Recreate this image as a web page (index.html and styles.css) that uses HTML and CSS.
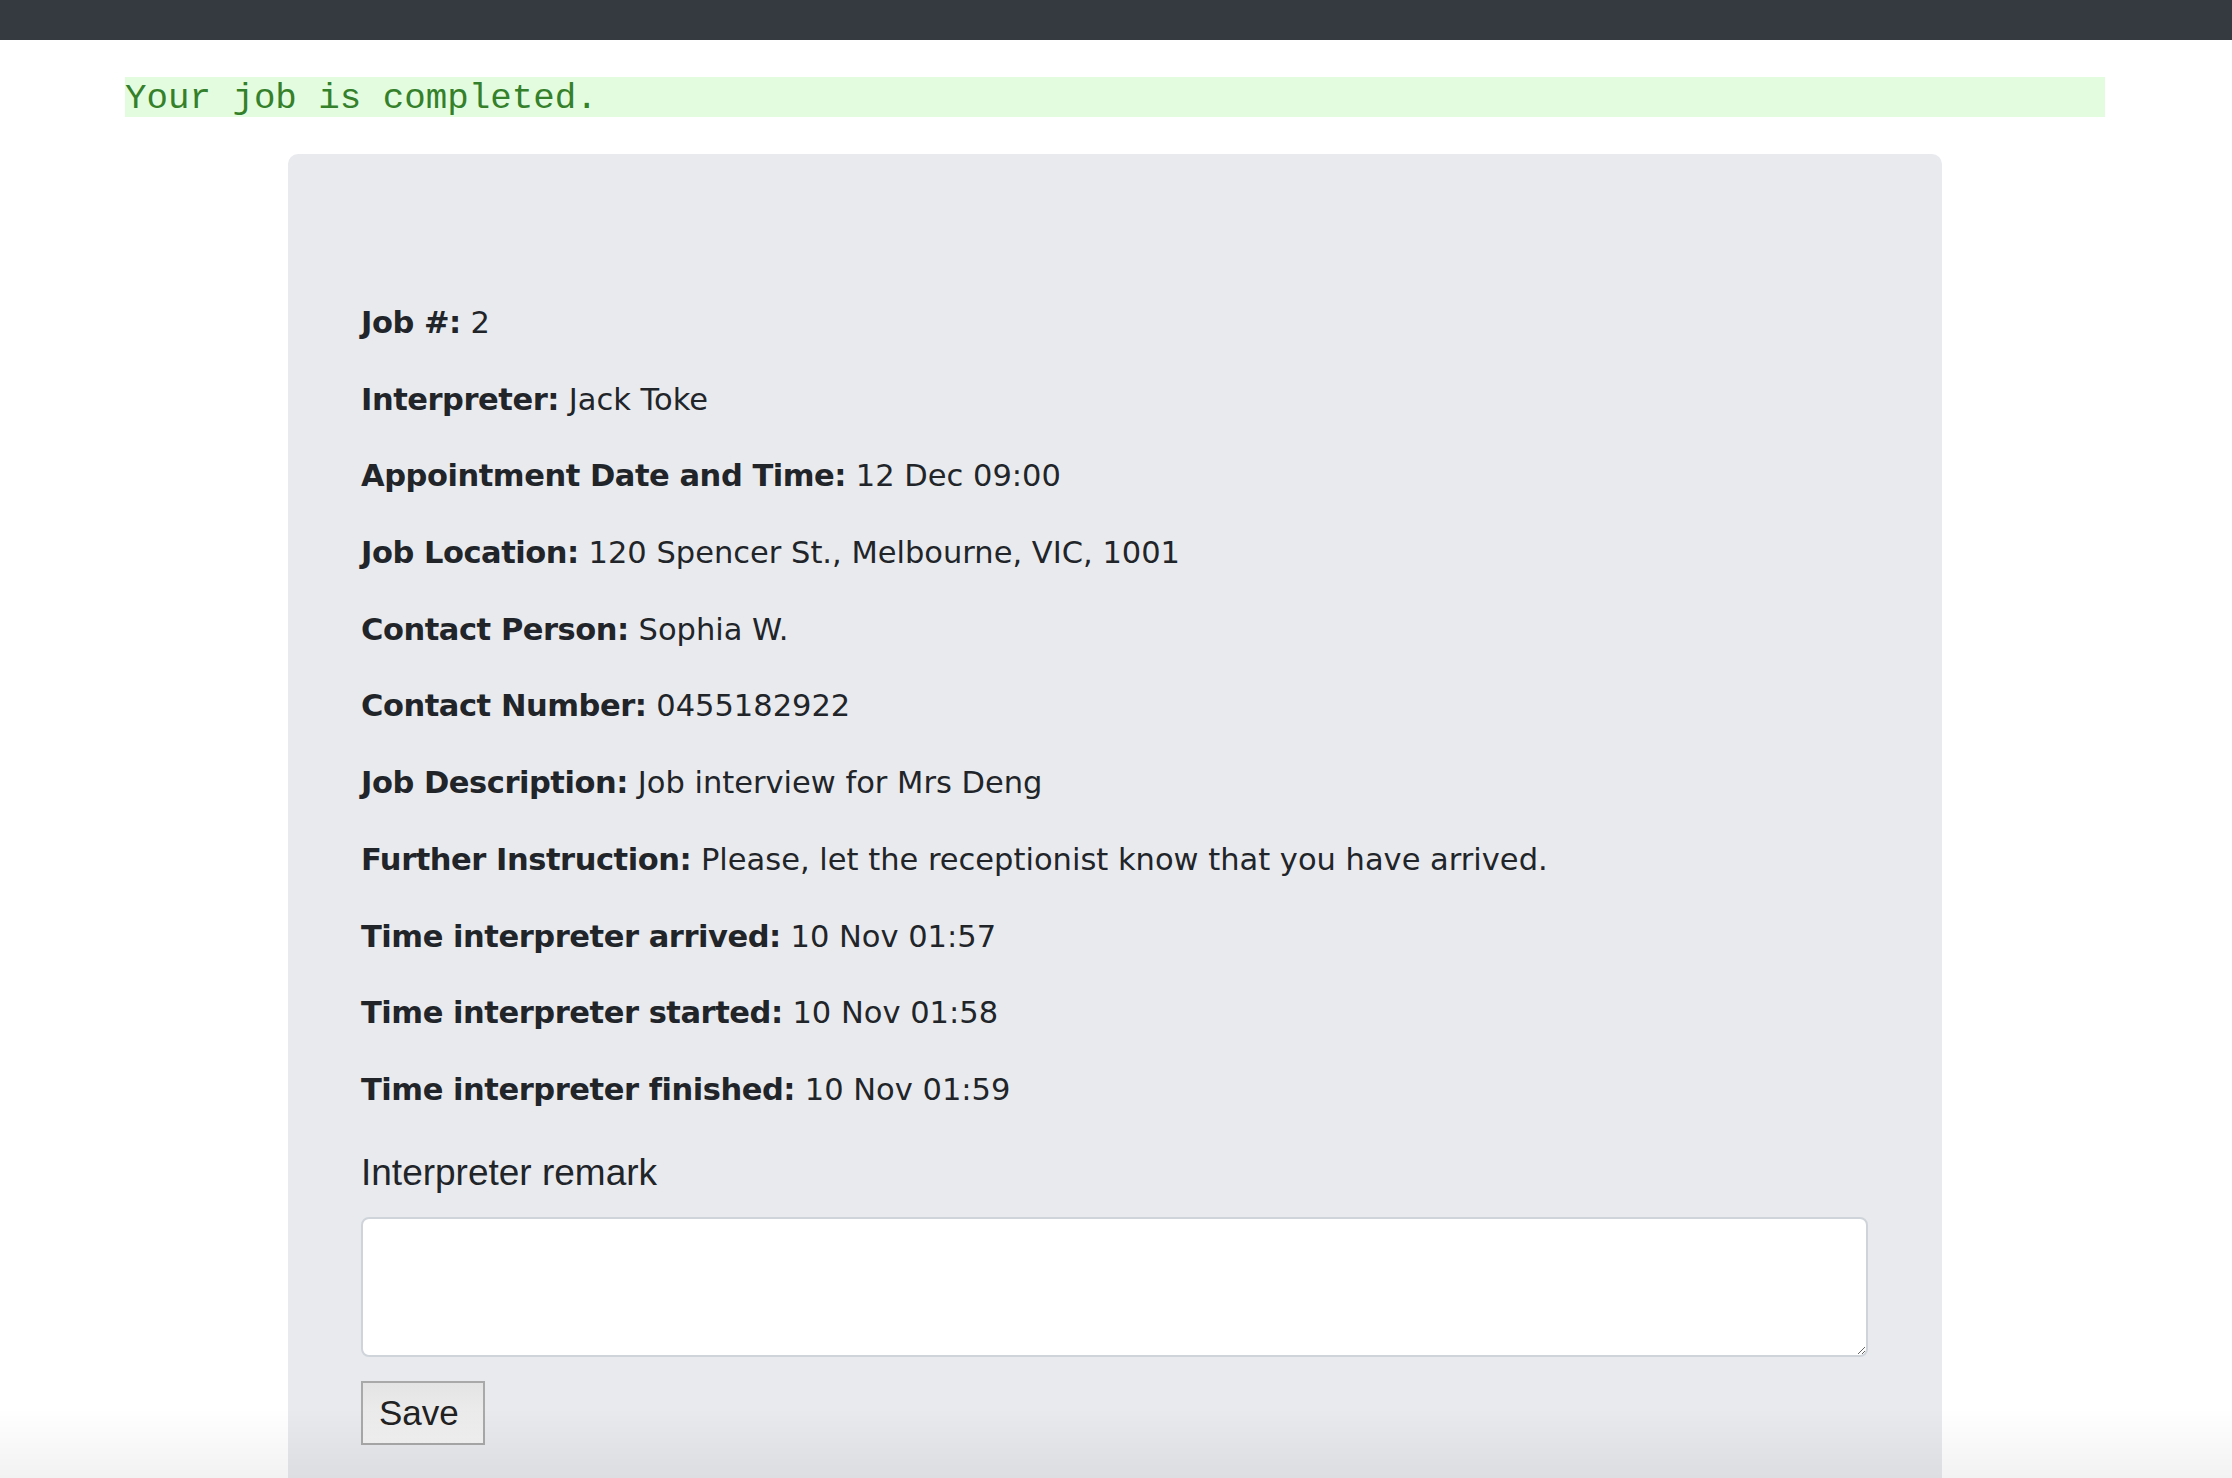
FILE: index.html
```html
<!DOCTYPE html>
<html lang="en">
<head>
<meta charset="utf-8">
<title>Job completed</title>
<link rel="stylesheet" href="styles.css">
</head>
<body>
<nav class="navbar"></nav>
<div class="alert">Your job is completed.</div>
<main class="card">
  <p class="row"><b>Job #:</b> 2</p>
  <p class="row"><b>Interpreter:</b> Jack Toke</p>
  <p class="row"><b>Appointment Date and Time:</b> 12 Dec 09:00</p>
  <p class="row"><b>Job Location:</b> 120 Spencer St., Melbourne, VIC, 1001</p>
  <p class="row"><b>Contact Person:</b> Sophia W.</p>
  <p class="row"><b>Contact Number:</b> 0455182922</p>
  <p class="row"><b>Job Description:</b> Job interview for Mrs Deng</p>
  <p class="row"><b>Further Instruction:</b> Please, let the receptionist know that you have arrived.</p>
  <p class="row"><b>Time interpreter arrived:</b> 10 Nov 01:57</p>
  <p class="row"><b>Time interpreter started:</b> 10 Nov 01:58</p>
  <p class="row"><b>Time interpreter finished:</b> 10 Nov 01:59</p>
  <form class="remark-form">
    <label class="remark-label" for="remark">Interpreter remark</label>
    <textarea class="remark-input" id="remark"></textarea>
    <button type="button" class="save-btn">Save</button>
  </form>
</main>
<div class="bottom-fade"></div>
</body>
</html>
```
FILE: styles.css
```css
html, body {
  margin: 0;
  padding: 0;
  background: #ffffff;
}
body {
  font-family: "DejaVu Sans", Verdana, sans-serif;
  color: #212529;
  overflow: hidden;
  height: 1478px;
}
.navbar {
  height: 40px;
  background: #343a40;
}
.alert {
  box-sizing: border-box;
  margin: 37px 127px 0 125px;
  height: 40px;
  padding-top: 3px;
  background: #e3fce0;
  color: #35802a;
  font-family: "Liberation Mono", "Courier New", monospace;
  font-size: 35.8px;
  line-height: 37px;
  white-space: pre;
}
.card {
  box-sizing: border-box;
  width: 1654px;
  margin: 37px auto 0 288px;
  padding: 146px 74px 60px 73px;
  background: #e9eaee;
  border-radius: 10px;
}
.row {
  margin: 0 0 30.7px 0;
  font-size: 30.5px;
  line-height: 46px;
  white-space: nowrap;
}
.row b {
  font-weight: bold;
  letter-spacing: -0.45px;
}
.remark-form {
  display: flex;
  flex-direction: column;
  align-items: flex-start;
}
.remark-label {
  font-family: "Liberation Sans", Arial, sans-serif;
  font-size: 37px;
  line-height: 54px;
  margin: 2px 0 17px 0;
  color: #212529;
}
.remark-input {
  box-sizing: border-box;
  display: block;
  width: 1507px;
  height: 140px;
  margin: 0 0 24px 0;
  border: 2px solid #ced4da;
  border-radius: 8px;
  background: #ffffff;
  font-size: 30px;
}
.save-btn {
  box-sizing: border-box;
  width: 124px;
  height: 64px;
  padding: 0 0 0 16px;
  text-align: left;
  border: 2px solid #a9a9a9;
  border-radius: 0;
  background: linear-gradient(#e4e4e4, #f3f3f3);
  font-family: "Liberation Sans", Arial, sans-serif;
  font-size: 35px;
  color: #222222;
}
.bottom-fade {
  position: fixed;
  left: 0;
  right: 0;
  bottom: 0;
  height: 70px;
  background: linear-gradient(rgba(0,0,0,0), rgba(0,0,0,0.05));
  pointer-events: none;
}
```
